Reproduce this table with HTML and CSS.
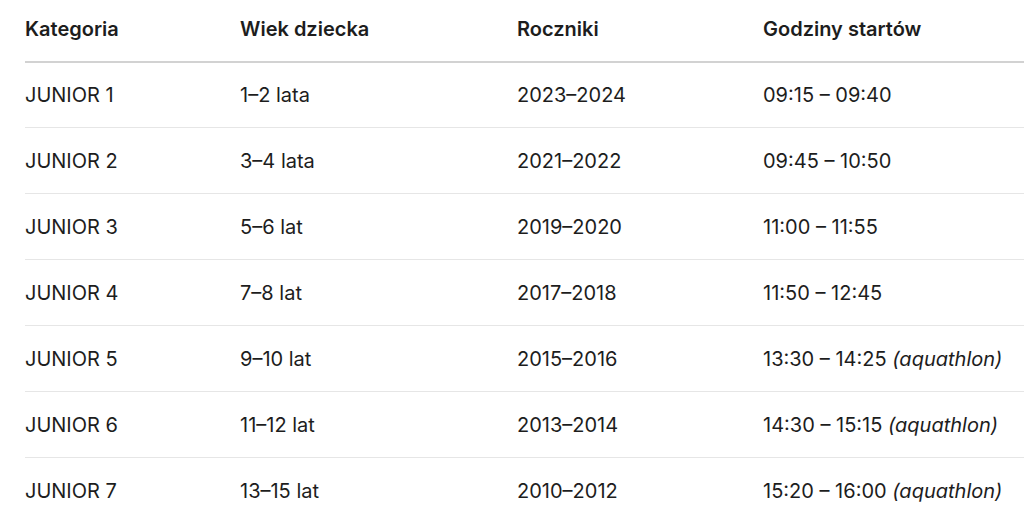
FILE: index.html
```html
<!DOCTYPE html>
<html lang="pl">
<head>
<meta charset="utf-8">
<title>Kategorie</title>
<link rel="stylesheet" href="styles.css">
</head>
<body>
<table class="schedule">
  <colgroup>
    <col class="c1"><col class="c2"><col class="c3"><col class="c4">
  </colgroup>
  <thead>
    <tr><th>Kategoria</th><th>Wiek dziecka</th><th>Roczniki</th><th>Godziny startów</th></tr>
  </thead>
  <tbody>
    <tr><td>JUNIOR 1</td><td>1–2 lata</td><td>2023–2024</td><td>09:15 – 09:40</td></tr>
    <tr><td>JUNIOR 2</td><td>3–4 lata</td><td>2021–2022</td><td>09:45 – 10:50</td></tr>
    <tr><td>JUNIOR 3</td><td>5–6 lat</td><td>2019–2020</td><td>11:00 – 11:55</td></tr>
    <tr><td>JUNIOR 4</td><td>7–8 lat</td><td>2017–2018</td><td>11:50 – 12:45</td></tr>
    <tr><td>JUNIOR 5</td><td>9–10 lat</td><td>2015–2016</td><td>13:30 – 14:25 <em>(aquathlon)</em></td></tr>
    <tr><td>JUNIOR 6</td><td>11–12 lat</td><td>2013–2014</td><td>14:30 – 15:15 <em>(aquathlon)</em></td></tr>
    <tr><td>JUNIOR 7</td><td>13–15 lat</td><td>2010–2012</td><td>15:20 – 16:00 <em>(aquathlon)</em></td></tr>
  </tbody>
</table>
</body>
</html>
```
FILE: styles.css
```css
html, body {
  margin: 0;
  padding: 0;
  background: #ffffff;
}
body {
  font-family: Inter, "Liberation Sans", Arial, sans-serif;
  color: #1d1d1d;
  overflow: hidden;
}
.schedule {
  margin-left: 25px;
  width: 999px;
  border-collapse: collapse;
  table-layout: fixed;
  font-size: 20px;
  line-height: 24px;
}
.c1 { width: 215px; }
.c2 { width: 277px; }
.c3 { width: 246px; }
.c4 { width: 261px; }
.schedule th {
  text-align: left;
  font-weight: 600;
  padding: 17px 0 20px 0;
  height: 24px;
  border-bottom: 2px solid #d2d2d2;
  white-space: nowrap;
}
.schedule td {
  padding: 0;
  height: 65px;
  vertical-align: middle;
  border-bottom: 1px solid #e6e6e6;
  white-space: nowrap;
}
.schedule tbody tr:first-child td {
  height: 64px;
}
.schedule em {
  font-style: italic;
}
```
